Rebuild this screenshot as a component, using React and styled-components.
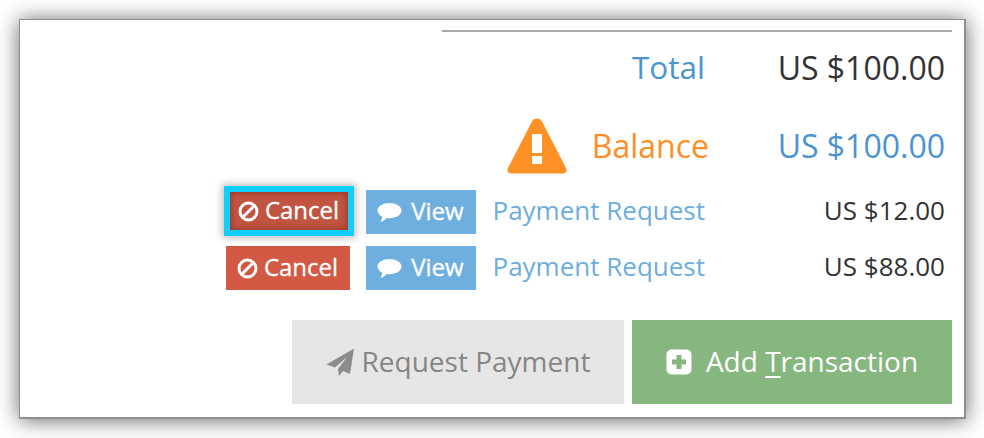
import React from "react";
import styled, { createGlobalStyle } from "styled-components";

const Global = createGlobalStyle`
  html, body { margin: 0; padding: 0; background: #fff; }
  body { font-family: "Open Sans", "Liberation Sans", sans-serif; width: 984px; height: 438px; overflow: hidden; }
`;
const Stage = styled.div`
  width: 984px; height: 438px; box-sizing: border-box; padding: 19px 18px 19px 19px; background: #fff;
`;
const Panel = styled.div`
  width: 947px; height: 400px; box-sizing: border-box; background: #fff;
  border: 1px solid #8f8f8f; border-width: 1px 2px 2px 1px;
  box-shadow: 0 1px 20px rgba(0,0,0,.6);
  padding: 10px 12px 0 0;
  display: flex; flex-direction: column; align-items: flex-end;
`;
const Rule = styled.div`
  width: 510px; height: 2px; background: #a9a9a9;
`;
const Row = styled.div`
  display: flex; justify-content: flex-end; align-items: center; padding-right: 7px;
  height: ${p => p.$h}px; margin-top: ${p => p.$mt || 0}px;
`;
const Label = styled.span`
  font-size: ${p => p.$size || 31.5}px; color: ${p => p.$color};
  line-height: 1; padding-bottom: ${p => p.$pb || 0}px;
  ${p => p.$link ? "margin-left: 16px;" : ""}
`;
const Amount = styled.span`
  width: ${p => p.$w || 240}px; text-align: right; font-size: ${p => p.$size || 32}px;
  color: ${p => p.$color || "#333"}; line-height: 1; padding-bottom: ${p => p.$pb || 0}px;
`;
const Btn = styled.div`
  box-sizing: border-box; height: 44px; padding-right: 2px; display: flex; align-items: center; justify-content: center; gap: ${p => p.$gap}px;
  font-size: 24px; color: #fff; width: ${p => p.$w}px; background: ${p => p.$bg}; margin-left: ${p => p.$ml || 0}px;
  -webkit-text-stroke: .3px #fff;
`;
const FocusBtn = styled.div`
  box-sizing: border-box; width: 130px; height: 50px; margin: 0 -4px 2px -2px; padding-right: 2px;
  border: 6px solid #10d0fb; background: #c25542; color: #fff; font-size: 24px;
  display: flex; align-items: center; justify-content: center; gap: 6px;
  -webkit-text-stroke: .3px #fff;
  box-shadow: 0 0 7px 2px rgba(0,0,0,.26), inset 0 0 6px 1px rgba(120,35,20,.6);
`;
const BtnText = styled.span`
  line-height: 1; padding-bottom: 3px;
`;
const Actions = styled.div`
  display: flex; gap: 8px; margin-top: 30px;
`;
const BigBtn = styled.div`
  box-sizing: border-box; height: 84px; width: ${p => p.$w}px; background: ${p => p.$bg}; color: ${p => p.$color};
  display: flex; align-items: center; justify-content: center; gap: ${p => p.$gap}px; font-size: 28px;
`;
const BigText = styled.span`
  line-height: 1; padding-bottom: 3px;
`;
const Under = styled.span`
  text-decoration: underline; text-underline-offset: 4px; text-decoration-thickness: 2px;
`;
const WarnSvg = styled.svg`
  margin-right: 25px; margin-top: -3px; flex: none;
`;

const Warn = () => (
  <WarnSvg width="60" height="56" viewBox="0 0 60 56">
    <path d="M30 0.500 c2.500 0 4 1 5 3 L59 50 c1.500 3 0 5.500-3.500 5.500 H4.500 C1 55.500 -.5 53 1 50 L25 3.500 c1-2 2.500-3 5-3z" fill="#fd9126" />
    <rect x="25" y="16" width="10" height="19" fill="#fff" />
    <rect x="25" y="38" width="10" height="8" fill="#fff" />
  </WarnSvg>
);
const Ban = () => (
  <svg width="21" height="21" viewBox="0 0 21 21">
    <circle cx="10.500" cy="10.500" r="8.500" fill="none" stroke="#fff" strokeWidth="3" />
    <path d="M4.500 16.500 L16.500 4.500" stroke="#fff" strokeWidth="3" />
  </svg>
);
const Bubble = () => (
  <svg width="25" height="23" viewBox="0 0 26 22">
    <path d="M13 1 C20 1 25.500 4.500 25.500 9 S20 17 13 17 C12 17 11 17 10 16.800 C8 19 5.500 20.500 3 21 C4.500 19.500 5.500 17.500 5.500 15.500 C2.500 14 .5 11.500 .5 9 C.5 4.500 6 1 13 1z" fill="#fff" />
  </svg>
);
const Plane = () => (
  <svg width="28" height="28" viewBox="0 0 28 28">
    <path d="M28 0.500 L0.500 16.500 L9 19.500 L21 9 L12 21 L13 28 L17 23 L24 26z" fill="#8c8c8c" />
  </svg>
);
const Plus = () => (
  <svg width="26" height="26" viewBox="0 0 26 26">
    <rect x="0.500" y="0.500" width="25" height="25" rx="5" fill="#fff" />
    <path d="M13 6 V20 M6 13 H20" stroke="#86b77f" strokeWidth="5" />
  </svg>
);

const PaymentRow = ({ amount, focus }) => (
  <Row $h={44} $mt={focus ? 0 : 12}>
    {focus ? (
      <FocusBtn><Ban /><BtnText>Cancel</BtnText></FocusBtn>
    ) : (
      <Btn $w={124} $bg="#d25a45" $gap={6}><Ban /><BtnText>Cancel</BtnText></Btn>
    )}
    <Btn $w={110} $bg="#6db0e0" $ml={16} $gap={9}><Bubble /><BtnText>View</BtnText></Btn>
    <Label $size={26} $color="#6daee0" $link $pb={4}>Payment Request</Label>
    <Amount $size={26} $pb={4}>{amount}</Amount>
  </Row>
);

export default function App() {
  return (
    <Stage>
      <Global />
      <Panel>
        <Rule />
        <Row $h={72}>
          <Label $color="#4a94d2" $pb={2}>Total</Label>
          <Amount>US $100.00</Amount>
        </Row>
        <Row $h={86}>
          <Warn />
          <Label $size={32} $color="#fd8f26" $pb={2}>Balance</Label>
          <Amount $color="#4a94d2" $w={236} $pb={2}>US $100.00</Amount>
        </Row>
        <PaymentRow amount="US $12.00" focus />
        <PaymentRow amount="US $88.00" />
        <Actions>
          <BigBtn $w={332} $bg="#e6e6e6" $color="#868686" $gap={8}><Plane /><BigText>Request Payment</BigText></BigBtn>
          <BigBtn $w={320} $bg="#86b77f" $color="#fff" $gap={14}><Plus /><BigText>Add <Under>T</Under>ransaction</BigText></BigBtn>
        </Actions>
      </Panel>
    </Stage>
  );
}
